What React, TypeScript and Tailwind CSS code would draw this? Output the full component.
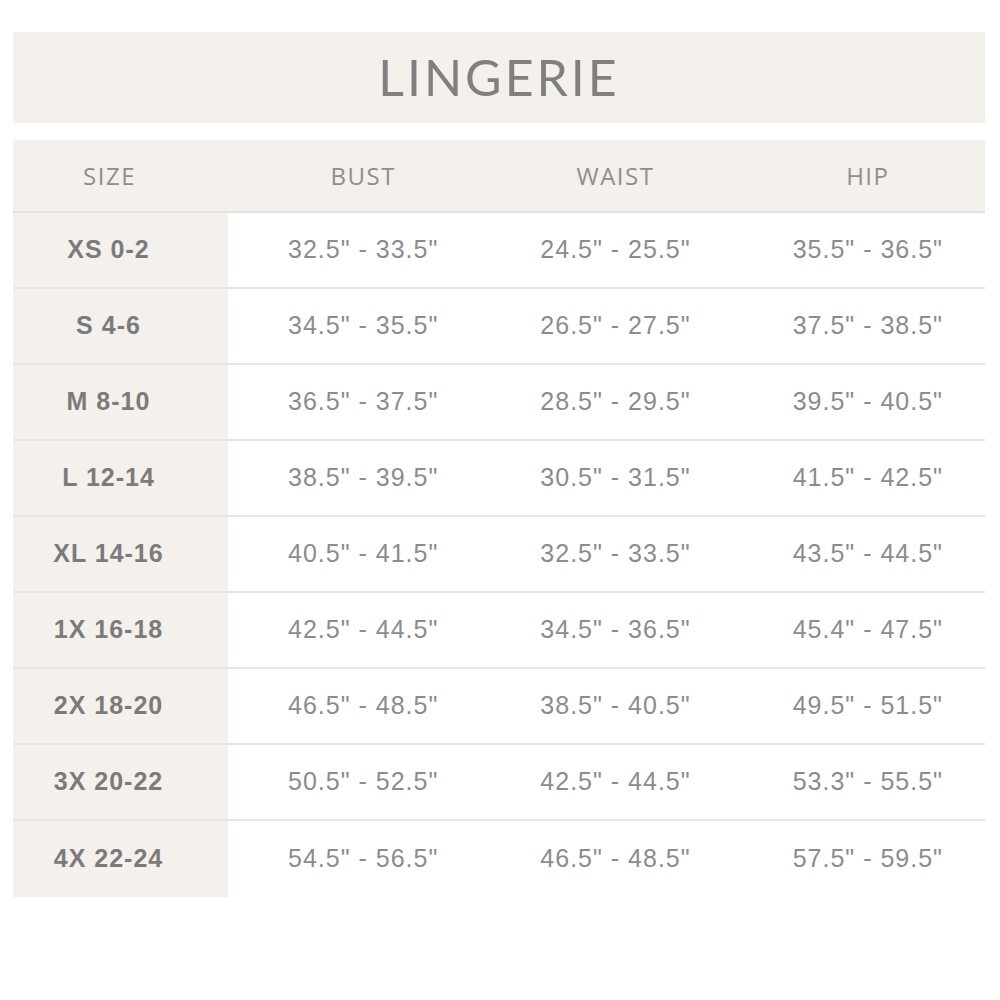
import React from 'react';

const rows = [
  { size: 'XS 0-2', bust: '32.5" - 33.5"', waist: '24.5" - 25.5"', hip: '35.5" - 36.5"' },
  { size: 'S 4-6', bust: '34.5" - 35.5"', waist: '26.5" - 27.5"', hip: '37.5" - 38.5"' },
  { size: 'M 8-10', bust: '36.5" - 37.5"', waist: '28.5" - 29.5"', hip: '39.5" - 40.5"' },
  { size: 'L 12-14', bust: '38.5" - 39.5"', waist: '30.5" - 31.5"', hip: '41.5" - 42.5"' },
  { size: 'XL 14-16', bust: '40.5" - 41.5"', waist: '32.5" - 33.5"', hip: '43.5" - 44.5"' },
  { size: '1X 16-18', bust: '42.5" - 44.5"', waist: '34.5" - 36.5"', hip: '45.4" - 47.5"' },
  { size: '2X 18-20', bust: '46.5" - 48.5"', waist: '38.5" - 40.5"', hip: '49.5" - 51.5"' },
  { size: '3X 20-22', bust: '50.5" - 52.5"', waist: '42.5" - 44.5"', hip: '53.3" - 55.5"' },
  { size: '4X 22-24', bust: '54.5" - 56.5"', waist: '46.5" - 48.5"', hip: '57.5" - 59.5"' },
];

const SizeChart: React.FC = () => {
  return (
    <div className="min-h-screen bg-white pt-[32px] pl-[13px] pr-[15px]">
      {/* Title */}
      <div className="h-[91px] bg-[#f4f1ec] flex items-center justify-center">
        <h1 className="text-[50px] font-normal tracking-[3px] text-[#808080] font-['Lato',sans-serif]">
          LINGERIE
        </h1>
      </div>

      {/* Table */}
      <div className="mt-[17px] font-['Liberation_Sans',sans-serif]">
        {/* Header */}
        <div className="grid grid-cols-[215px_1fr_1fr_1fr] h-[73px] bg-[#f4f1ec] border-b-2 border-[#e4e2df] font-['Open_Sans',sans-serif] text-[24px] tracking-[1.5px] text-[#8e8e8e]">
          <div className="flex items-center justify-center pr-[22px]">SIZE</div>
          <div className="flex items-center justify-center pl-[18px]">BUST</div>
          <div className="flex items-center justify-center pl-[18px]">WAIST</div>
          <div className="flex items-center justify-center pl-[18px]">HIP</div>
        </div>

        {rows.map((row, i) => (
          <div
            key={row.size}
            className={`grid grid-cols-[215px_1fr_1fr_1fr] h-[76px] ${
              i < rows.length - 1 ? 'border-b-2 border-[#e6e6e6]' : ''
            }`}
          >
            <div className="flex items-center justify-center pr-[24px] bg-[#f4f1ec] text-[25px] tracking-[1px] font-bold text-[#7b7b7b]">
              {row.size}
            </div>
            <div className="flex items-center justify-center pl-[18px] text-[25px] tracking-[1px] text-[#8c8c8c]">
              {row.bust}
            </div>
            <div className="flex items-center justify-center pl-[18px] text-[25px] tracking-[1px] text-[#8c8c8c]">
              {row.waist}
            </div>
            <div className="flex items-center justify-center pl-[18px] text-[25px] tracking-[1px] text-[#8c8c8c]">
              {row.hip}
            </div>
          </div>
        ))}
      </div>
    </div>
  );
};

export default SizeChart;
